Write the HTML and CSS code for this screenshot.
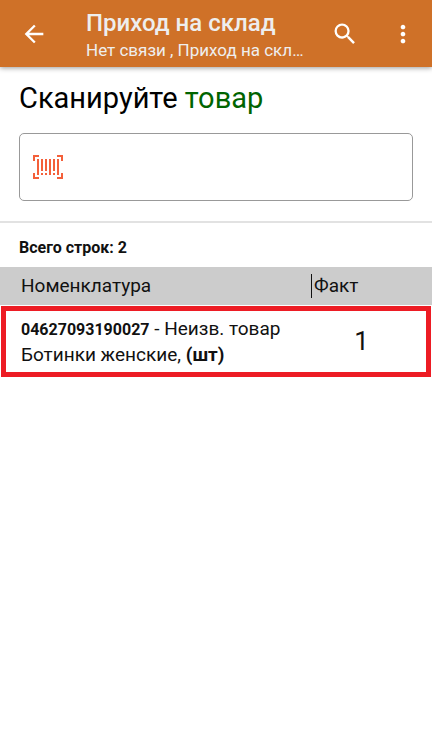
FILE: index.html
```html
<!DOCTYPE html>
<html lang="ru">
<head>
  <meta charset="UTF-8">
  <meta name="viewport" content="width=device-width, initial-scale=1.0">
  <title>Приход на склад</title>
  <link rel="stylesheet" href="styles.css">
</head>
<body>
  <header class="toolbar">
    <button type="button" class="icon-button" aria-label="Назад">
      <svg width="28" height="28" viewBox="0 0 24 24"><path fill="currentColor" d="M20 11H7.83l5.59-5.59L12 4l-8 8 8 8 1.41-1.41L7.83 13H20v-2z"/></svg>
    </button>
    <div class="toolbar-text">
      <h1>Приход на склад</h1>
      <p>Нет связи , Приход на скл…</p>
    </div>
    <button type="button" class="icon-button" aria-label="Поиск">
      <svg width="28" height="28" viewBox="0 0 24 24"><path fill="currentColor" d="M15.5 14h-.79l-.28-.27A6.47 6.47 0 0 0 16 9.5 6.5 6.5 0 1 0 9.5 16c1.61 0 3.09-.59 4.23-1.57l.27.28v.79l5 4.99L20.49 19l-4.99-5zm-6 0C7.01 14 5 11.99 5 9.5S7.01 5 9.5 5 14 7.01 14 9.5 11.99 14 9.5 14z"/></svg>
    </button>
    <button type="button" class="icon-button" aria-label="Меню">
      <svg width="28" height="28" viewBox="0 0 24 24"><path fill="currentColor" d="M12 8c1.1 0 2-.9 2-2s-.9-2-2-2-2 .9-2 2 .9 2 2 2zm0 2c-1.1 0-2 .9-2 2s.9 2 2 2 2-.9 2-2-.9-2-2-2zm0 6c-1.1 0-2 .9-2 2s.9 2 2 2 2-.9 2-2-.9-2-2-2z"/></svg>
    </button>
  </header>

  <main>
    <section class="scan">
      <label for="barcode">Сканируйте <span>товар</span></label>
      <div class="scan-field">
        <svg width="30" height="24" viewBox="0 0 30 24">
          <path fill="none" stroke="currentColor" stroke-width="2" d="M1 6V1h5M24 1h5v5M29 18v5h-5M6 23H1v-5"/>
          <path fill="none" stroke="currentColor" stroke-width="2" d="M5 4v16M17 4v16M25 4v16M9 4v12M9 18v2M13 4v12M13 18v2M21 4v12M21 18v2"/>
        </svg>
        <input type="text" id="barcode">
      </div>
    </section>

    <p class="total">Всего строк: 2</p>

    <table class="items">
      <thead>
        <tr>
          <th class="name">Номенклатура</th>
          <th class="fact"><span>Факт</span></th>
        </tr>
      </thead>
      <tbody>
        <tr class="selected">
          <td class="name">
            <div><b class="code">04627093190027</b> - Неизв. товар</div>
            <div>Ботинки женские, <b>(шт)</b></div>
          </td>
          <td class="fact">1</td>
        </tr>
      </tbody>
    </table>
  </main>
</body>
</html>
```
FILE: styles.css
```css
* {
  box-sizing: border-box;
}
body {
  margin: 0;
  font-family: Roboto, sans-serif;
  font-size: 19px;
  color: #111;
  background-color: #fff;
}
.toolbar {
  display: flex;
  align-items: center;
  height: 67px;
  padding: 0 3px 0 8px;
  color: #fff;
  background-color: #cf7128;
  box-shadow: 0 1px 5px rgba(0, 0, 0, 0.4);
}
.icon-button {
  display: flex;
  flex: none;
  align-items: center;
  justify-content: center;
  width: 52px;
  height: 52px;
  padding: 0;
  border: none;
  color: inherit;
  background: none;
  cursor: pointer;
}
.toolbar-text {
  flex: 1;
  min-width: 0;
  margin-left: 26px;
  color: #eee;
}
.toolbar-text h1 {
  margin: 0;
  padding-top: 2px;
  font-size: 24px;
  font-weight: 500;
  line-height: 30px;
}
.toolbar-text p {
  margin: 0;
  font-size: 17px;
  line-height: 24px;
  white-space: nowrap;
}
.toolbar .icon-button:last-child {
  margin-left: 6px;
}
.scan {
  padding: 12px 19px 20px;
  border-bottom: 2px solid #e2e2e2;
}
.scan label {
  display: block;
  font-size: 29px;
  line-height: 38px;
  color: #000;
}
.scan label span {
  color: #006400;
}
.scan-field {
  display: flex;
  align-items: center;
  height: 68px;
  margin-top: 16px;
  padding: 0 13px;
  border: 1px solid #999;
  border-radius: 5px;
  color: #f4603a;
}
.scan-field input {
  flex: 1;
  min-width: 0;
  height: 100%;
  margin-left: 12px;
  padding: 0;
  border: none;
  outline: none;
  font: inherit;
  color: #111;
  background: none;
}
.total {
  margin: 0;
  padding: 13px 19px 7px;
  font-size: 16px;
  font-weight: 700;
  line-height: 24px;
}
.items {
  width: 100%;
  border-spacing: 0;
  table-layout: fixed;
}
.items th {
  padding: 7px 0;
  font-weight: 400;
  line-height: 24px;
  text-align: left;
  background-color: #ccc;
}
.items .name {
  width: 72%;
  padding-left: 21px;
}
.items th span {
  display: block;
  padding-left: 2px;
  border-left: 1px solid #111;
}
.items td {
  padding: 11px 0;
  line-height: 25px;
}
.items td.fact {
  padding-right: 20px;
  font-size: 26px;
  text-align: center;
}
.items .code {
  font-size: 16px;
}
.selected {
  outline: 5px solid #ed1c24;
  outline-offset: -6px;
}
```
